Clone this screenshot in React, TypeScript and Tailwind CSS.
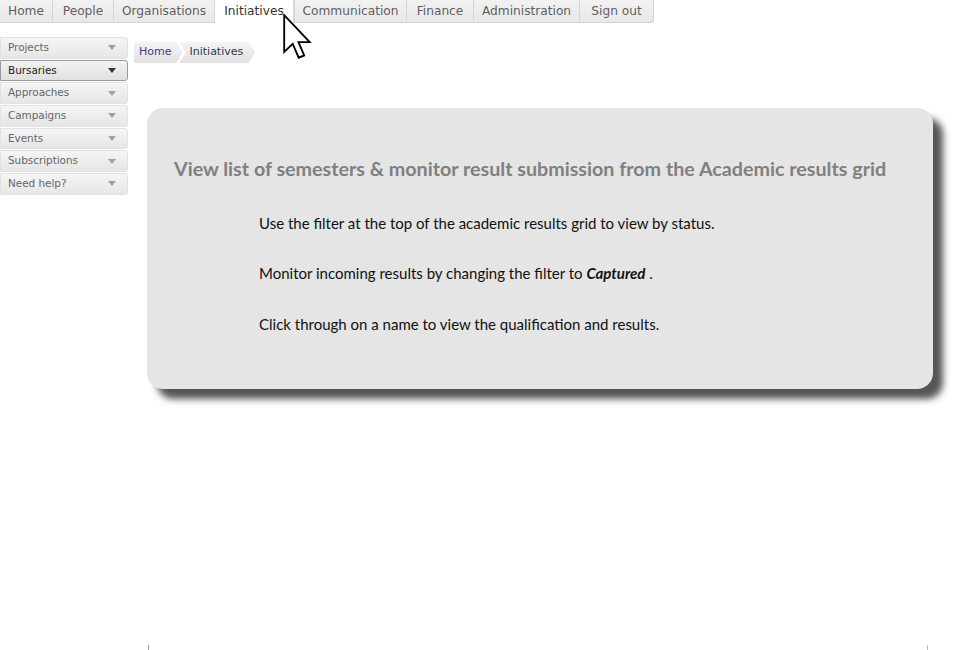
import React from "react";

const tabs = [
  { label: "Home", w: "w-[52px]" },
  { label: "People", w: "w-[61px]" },
  { label: "Organisations", w: "w-[101px]" },
  { label: "Initiatives", w: "w-[80px]", active: true },
  { label: "Communication", w: "w-[112px]" },
  { label: "Finance", w: "w-[67px]" },
  { label: "Administration", w: "w-[106px]" },
  { label: "Sign out", w: "w-[74px]" },
];

const sideItems = ["Projects", "Bursaries", "Approaches", "Campaigns", "Events", "Subscriptions", "Need help?"];

const Caret = ({ dark }: { dark?: boolean }) => (
  <svg width="8" height="5" viewBox="0 0 8 5" className={dark ? "text-[#333]" : "text-[#a0a0a0]"}>
    <path d="M0 0h8L4 5z" fill="currentColor" />
  </svg>
);

const Cursor = () => (
  <svg
    width="30"
    height="46"
    viewBox="0 0 13 20"
    className="absolute left-[283px] top-[14px]"
  >
    <path
      d="M0.5 0.5 L0.5 16.5 L4.2 13 L6.8 19 L9.2 18 L6.7 12.2 L11.6 12.2 Z"
      fill="#fff"
      stroke="#000"
      strokeWidth="0.8"
      strokeLinejoin="miter"
    />
  </svg>
);

export default function App() {
  return (
    <div className="relative h-[650px] w-[960px] overflow-hidden bg-white font-['DejaVu_Sans',sans-serif]">
      {/* top nav */}
      <div className="flex h-[23px]">
        <div className="flex rounded-br-[3px] border-b border-r border-[#d4d4d4] bg-gradient-to-b from-[#f2f2f2] to-[#e8e8e8]">
          {tabs.map((t, i) => (
            <div
              key={t.label}
              className={`${t.w} flex h-[22px] items-center justify-center text-[12.2px] text-[#5f5f5f] ${
                i > 0 ? "border-l border-[#d6d6d6]" : ""
              } ${t.active ? "h-[23px] border-r border-[#cfcfcf] bg-white text-[#333]" : ""}`}
            >
              {t.label}
            </div>
          ))}
        </div>
      </div>

      <div className="flex">
        {/* sidebar */}
        <div className="mt-[14px] flex w-[128px] flex-col gap-[1px]">
          {sideItems.map((s) => {
            const active = s === "Bursaries";
            return (
              <div
                key={s}
                className={`flex h-[21.7px] items-center justify-between rounded-r-[3px] border pl-[7px] pr-[11px] text-[10.4px] ${
                  active
                    ? "border-[#9a9a9a] bg-gradient-to-b from-[#f2f2f2] to-[#e0e0e0] text-[#222]"
                    : "border-[#e2e2e2] bg-gradient-to-b from-[#f5f5f5] to-[#e6e6e6] text-[#666]"
                }`}
              >
                <span>{s}</span>
                <Caret dark={active} />
              </div>
            );
          })}
        </div>

        {/* main */}
        <div className="flex flex-1 flex-col pl-[6px]">
          <div className="mt-[19px] flex h-[21px] text-[11px]">
            <div className="flex h-full items-center bg-gradient-to-b from-[#f4f4f4] to-[#e2e2e2] pl-[5px] pr-[11px] text-[#3e3a86] [clip-path:polygon(0_0,calc(100%-6px)_0,100%_50%,calc(100%-6px)_100%,0_100%)]">
              Home
            </div>
            <div className="-ml-[3px] flex h-full items-center bg-gradient-to-b from-[#f4f4f4] to-[#e2e2e2] pl-[10px] pr-[12px] text-[#2f3a4a] [clip-path:polygon(0_0,calc(100%-7px)_0,100%_50%,calc(100%-7px)_100%,0_100%,6px_50%)]">
              Initiatives
            </div>
          </div>

          <div className="ml-[13px] mt-[45px] flex h-[281px] w-[786px] flex-col rounded-[16px] bg-[#e5e5e5] font-['Lato',sans-serif] shadow-[10px_10px_7px_#555]">
            <h1 className="mt-[46px] pl-[27px] text-[19.7px] font-bold text-[#808080]">
              View list of semesters &amp; monitor result submission from the Academic results grid
            </h1>
            <div className="mt-[28px] flex flex-col gap-[28px] pl-[112px] text-[15px] text-[#111]">
              <p>Use the filter at the top of the academic results grid to view by status.</p>
              <p>
                Monitor incoming results by changing the filter to <b className="italic">Captured</b> .
              </p>
              <p>Click through on a name to view the qualification and results.</p>
            </div>
          </div>

          <div className="ml-[14px] mt-[256px] flex h-[6px] w-[780px] justify-between">
            <div className="w-px bg-[#999]" />
            <div className="w-px bg-[#bbb]" />
          </div>
        </div>
      </div>

      <Cursor />
    </div>
  );
}
